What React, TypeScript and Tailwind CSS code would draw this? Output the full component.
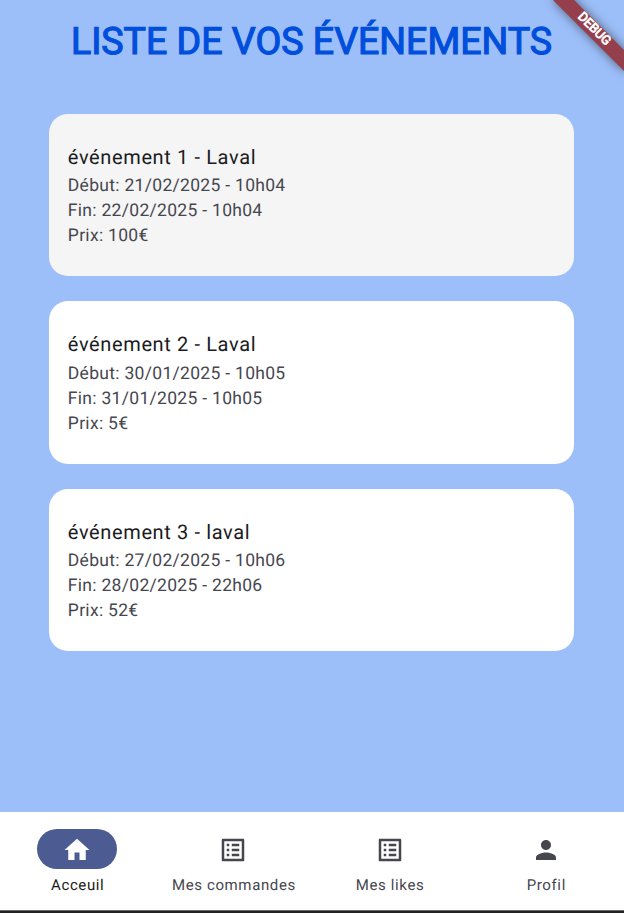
import React from "react";
import { MdHome, MdListAlt, MdPerson } from "react-icons/md";

type Event = { title: string; start: string; end: string; price: string; hovered?: boolean };

const events: Event[] = [
  { title: "événement 1 - Laval", start: "21/02/2025 - 10h04", end: "22/02/2025 - 10h04", price: "100€", hovered: true },
  { title: "événement 2 - Laval", start: "30/01/2025 - 10h05", end: "31/01/2025 - 10h05", price: "5€" },
  { title: "événement 3 - laval", start: "27/02/2025 - 10h06", end: "28/02/2025 - 22h06", price: "52€" },
];

const tabs = [
  { label: "Acceuil", Icon: MdHome, active: true },
  { label: "Mes commandes", Icon: MdListAlt, active: false },
  { label: "Mes likes", Icon: MdListAlt, active: false },
  { label: "Profil", Icon: MdPerson, active: false },
];

function EventCard({ event }: { event: Event }) {
  return (
    <article
      className={`h-[162.5px] rounded-[19px] pt-[28px] pl-[18.8px] ${event.hovered ? "bg-[#f5f5f5]" : "bg-white"}`}
    >
      <h2 className="text-[20px] leading-[30px] tracking-[0.625px] text-[#1b1b21]">{event.title}</h2>
      <div className="pt-[2.6px] text-[17.5px] leading-[25px] tracking-[0.3px] text-[#46464f]">
        <p>Début: {event.start}</p>
        <p>Fin: {event.end}</p>
        <p>Prix: {event.price}</p>
      </div>
    </article>
  );
}

function DebugBanner() {
  return (
    <div className="absolute top-[22.5px] right-[-20px] flex h-[15px] w-[100px] rotate-45 items-center justify-center bg-[#963f4c] pr-[2px] text-[12.75px] leading-none text-white shadow-[0_0_11px_rgba(0,0,0,0.5)] [-webkit-text-stroke:0.8px_white]">
      DEBUG
    </div>
  );
}

export default function App() {
  return (
    <div className="relative flex h-[913px] w-[624px] flex-col overflow-hidden bg-[#9dbff9] font-[Roboto,sans-serif] [text-rendering:geometricPrecision]">
      <main className="flex-1 pr-[50px] pl-[49px]">
        <h1 className="pt-[17px] text-center text-[37.5px] leading-[50px] whitespace-nowrap text-[#004edc] [-webkit-text-stroke:1.2px_#004edc]">
          LISTE DE VOS ÉVÉNEMENTS
        </h1>
        <div className="mt-[46.6px] flex flex-col gap-[25px]">
          {events.map((event) => (
            <EventCard key={event.title} event={event} />
          ))}
        </div>
      </main>
      <nav className="h-[98px] bg-white pt-[17.4px]">
        <div className="-ml-[0.8px] grid grid-cols-4">
          {tabs.map(({ label, Icon, active }) => (
            <div key={label} className="flex flex-col items-center">
              <div
                className={`flex h-[40px] w-[80px] items-center justify-center rounded-full ${active ? "bg-[#4c5c92] text-white" : "text-[#46464f]"}`}
              >
                <Icon size={30} className="relative top-[0.5px]" />
              </div>
              <span
                className={`mt-[5.6px] pl-[0.8px] text-[15px] leading-[20px] tracking-[0.625px] whitespace-nowrap ${active ? "text-[#1b1b21]" : "text-[#46464f]"}`}
              >
                {label}
              </span>
            </div>
          ))}
        </div>
      </nav>
      <div className="h-[3px] border-t border-[#6b6b6b] bg-[#222222]" />
      <DebugBanner />
    </div>
  );
}
